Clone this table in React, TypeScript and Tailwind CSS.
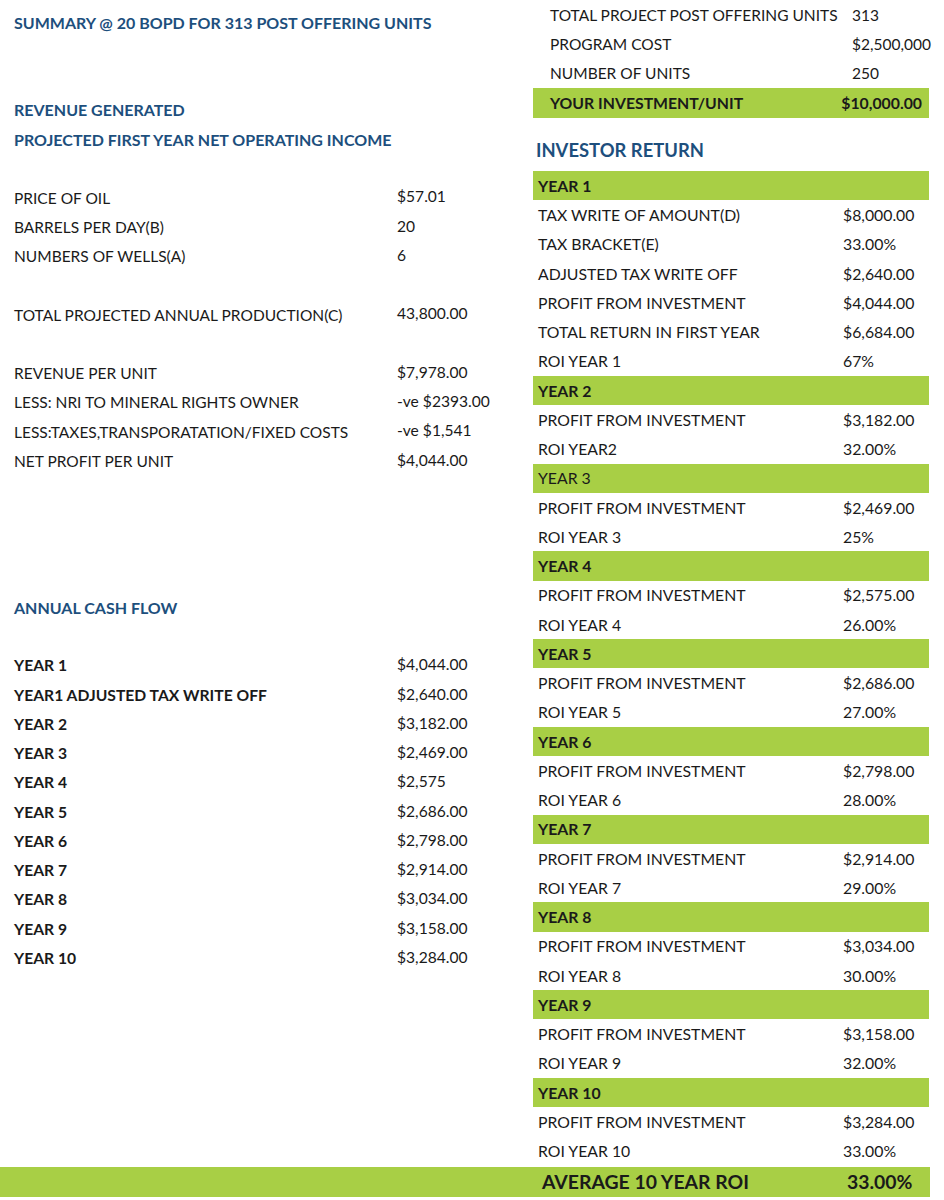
import React from "react";

type Row = { label?: string; value?: string; kind?: "head" | "bold" | "plain" | "empty" };

const left: Row[] = [
  { label: "SUMMARY @ 20 BOPD FOR 313 POST OFFERING UNITS", kind: "head" },
  { kind: "empty" },
  { kind: "empty" },
  { label: "REVENUE GENERATED", kind: "head" },
  { label: "PROJECTED FIRST YEAR NET OPERATING INCOME", kind: "head" },
  { kind: "empty" },
  { label: "PRICE OF OIL", value: "$57.01", kind: "plain" },
  { label: "BARRELS PER DAY(B)", value: "20", kind: "plain" },
  { label: "NUMBERS OF WELLS(A)", value: "6", kind: "plain" },
  { kind: "empty" },
  { label: "TOTAL PROJECTED ANNUAL PRODUCTION(C)", value: "43,800.00", kind: "plain" },
  { kind: "empty" },
  { label: "REVENUE PER UNIT", value: "$7,978.00", kind: "plain" },
  { label: "LESS: NRI TO MINERAL RIGHTS OWNER", value: "-ve $2393.00", kind: "plain" },
  { label: "LESS:TAXES,TRANSPORATATION/FIXED COSTS", value: "-ve $1,541", kind: "plain" },
  { label: "NET PROFIT PER UNIT", value: "$4,044.00", kind: "plain" },
  { kind: "empty" },
  { kind: "empty" },
  { kind: "empty" },
  { kind: "empty" },
  { label: "ANNUAL CASH FLOW", kind: "head" },
  { kind: "empty" },
  { label: "YEAR 1", value: "$4,044.00", kind: "bold" },
  { label: "YEAR1 ADJUSTED TAX WRITE OFF", value: "$2,640.00", kind: "bold" },
  { label: "YEAR 2", value: "$3,182.00", kind: "bold" },
  { label: "YEAR 3", value: "$2,469.00", kind: "bold" },
  { label: "YEAR 4", value: "$2,575", kind: "bold" },
  { label: "YEAR 5", value: "$2,686.00", kind: "bold" },
  { label: "YEAR 6", value: "$2,798.00", kind: "bold" },
  { label: "YEAR 7", value: "$2,914.00", kind: "bold" },
  { label: "YEAR 8", value: "$3,034.00", kind: "bold" },
  { label: "YEAR 9", value: "$3,158.00", kind: "bold" },
  { label: "YEAR 10", value: "$3,284.00", kind: "bold" },
];

type RRow = { label: string; value?: string; bar?: boolean; regular?: boolean };

const investor: RRow[] = [
  { label: "YEAR 1", bar: true },
  { label: "TAX WRITE OF AMOUNT(D)", value: "$8,000.00" },
  { label: "TAX BRACKET(E)", value: "33.00%" },
  { label: "ADJUSTED TAX WRITE OFF", value: "$2,640.00" },
  { label: "PROFIT FROM INVESTMENT", value: "$4,044.00" },
  { label: "TOTAL RETURN IN FIRST YEAR", value: "$6,684.00" },
  { label: "ROI YEAR 1", value: "67%" },
  { label: "YEAR 2", bar: true },
  { label: "PROFIT FROM INVESTMENT", value: "$3,182.00" },
  { label: "ROI YEAR2", value: "32.00%" },
  { label: "YEAR 3", bar: true, regular: true },
  { label: "PROFIT FROM INVESTMENT", value: "$2,469.00" },
  { label: "ROI YEAR 3", value: "25%" },
  { label: "YEAR 4", bar: true },
  { label: "PROFIT FROM INVESTMENT", value: "$2,575.00" },
  { label: "ROI YEAR 4", value: "26.00%" },
  { label: "YEAR 5", bar: true },
  { label: "PROFIT FROM INVESTMENT", value: "$2,686.00" },
  { label: "ROI YEAR 5", value: "27.00%" },
  { label: "YEAR 6", bar: true },
  { label: "PROFIT FROM INVESTMENT", value: "$2,798.00" },
  { label: "ROI YEAR 6", value: "28.00%" },
  { label: "YEAR 7", bar: true },
  { label: "PROFIT FROM INVESTMENT", value: "$2,914.00" },
  { label: "ROI YEAR 7", value: "29.00%" },
  { label: "YEAR 8", bar: true },
  { label: "PROFIT FROM INVESTMENT", value: "$3,034.00" },
  { label: "ROI YEAR 8", value: "30.00%" },
  { label: "YEAR 9", bar: true },
  { label: "PROFIT FROM INVESTMENT", value: "$3,158.00" },
  { label: "ROI YEAR 9", value: "32.00%" },
  { label: "YEAR 10", bar: true },
  { label: "PROFIT FROM INVESTMENT", value: "$3,284.00" },
  { label: "ROI YEAR 10", value: "33.00%" },
];

function LeftRow({ r }: { r: Row }) {
  if (r.kind === "empty") return <div className="h-[29.25px]" />;
  if (r.kind === "head")
    return (
      <div className="h-[29.25px] flex items-center text-[16px] font-bold text-[#1d4f7d]">
        {r.label}
      </div>
    );
  return (
    <div
      className={`h-[29.25px] flex items-center text-[#1a1a1a] ${
        r.kind === "bold" ? "font-bold text-[15.7px]" : "text-[15.5px]"
      }`}
    >
      <div className="w-[383px] shrink-0 whitespace-nowrap">{r.label}</div>
      <div className="font-normal text-[15.6px] -mt-[2px] whitespace-nowrap">{r.value}</div>
    </div>
  );
}

export default function App() {
  return (
    <div className="w-[944px] h-[1200px] bg-white overflow-hidden font-['Lato','Noto_Sans',sans-serif] text-[#1a1a1a]">
      <div className="flex">
        {/* Left column */}
        <div className="w-[533px] shrink-0 pl-[14px] pt-[8px]">
          {left.map((r, i) => (
            <LeftRow key={i} r={r} />
          ))}
        </div>

        {/* Right column */}
        <div className="w-[396px] shrink-0">
          <div className="pt-[0.5px] text-[15.5px]">
            <div className="h-[29.25px] flex items-center pl-[17px]">
              <div className="w-[302px] shrink-0 whitespace-nowrap">TOTAL PROJECT POST OFFERING UNITS</div>
              <div>313</div>
            </div>
            <div className="h-[29.25px] flex items-center pl-[17px]">
              <div className="w-[302px] shrink-0">PROGRAM COST</div>
              <div className="whitespace-nowrap">$2,500,000</div>
            </div>
            <div className="h-[29.25px] flex items-center pl-[17px]">
              <div className="w-[302px] shrink-0">NUMBER OF UNITS</div>
              <div>250</div>
            </div>
            <div className="h-[29.25px] flex items-center justify-between pl-[17px] pr-[7px] text-[15.8px] font-bold bg-[#a8cf45]">
              <div>YOUR INVESTMENT/UNIT</div>
              <div>$10,000.00</div>
            </div>
          </div>

          <div className="h-[53.5px] pt-[20px] pl-[3px]">
            <div className="leading-[25px] text-[18.4px] font-bold text-[#1d4f7d]">INVESTOR RETURN</div>
          </div>

          <div className="text-[15.8px]">
            {investor.map((r, i) =>
              r.bar ? (
                <div
                  key={i}
                  className={`h-[29.25px] flex items-center pl-[5px] bg-[#a8cf45] ${
                    r.regular ? "font-normal" : "font-bold"
                  }`}
                >
                  {r.label}
                </div>
              ) : (
                <div key={i} className="h-[29.25px] flex items-center pl-[5px]">
                  <div className="w-[305px] shrink-0 whitespace-nowrap">{r.label}</div>
                  <div>{r.value}</div>
                </div>
              )
            )}
          </div>
        </div>
      </div>

      {/* Bottom summary bar */}
      <div className="w-[930px] h-[30px] mt-[1px] bg-[#a8cf45] flex items-center text-[19.4px] font-bold">
        <div className="pl-[542px] w-[847px] shrink-0 whitespace-nowrap">AVERAGE 10 YEAR ROI</div>
        <div>33.00%</div>
      </div>
    </div>
  );
}
